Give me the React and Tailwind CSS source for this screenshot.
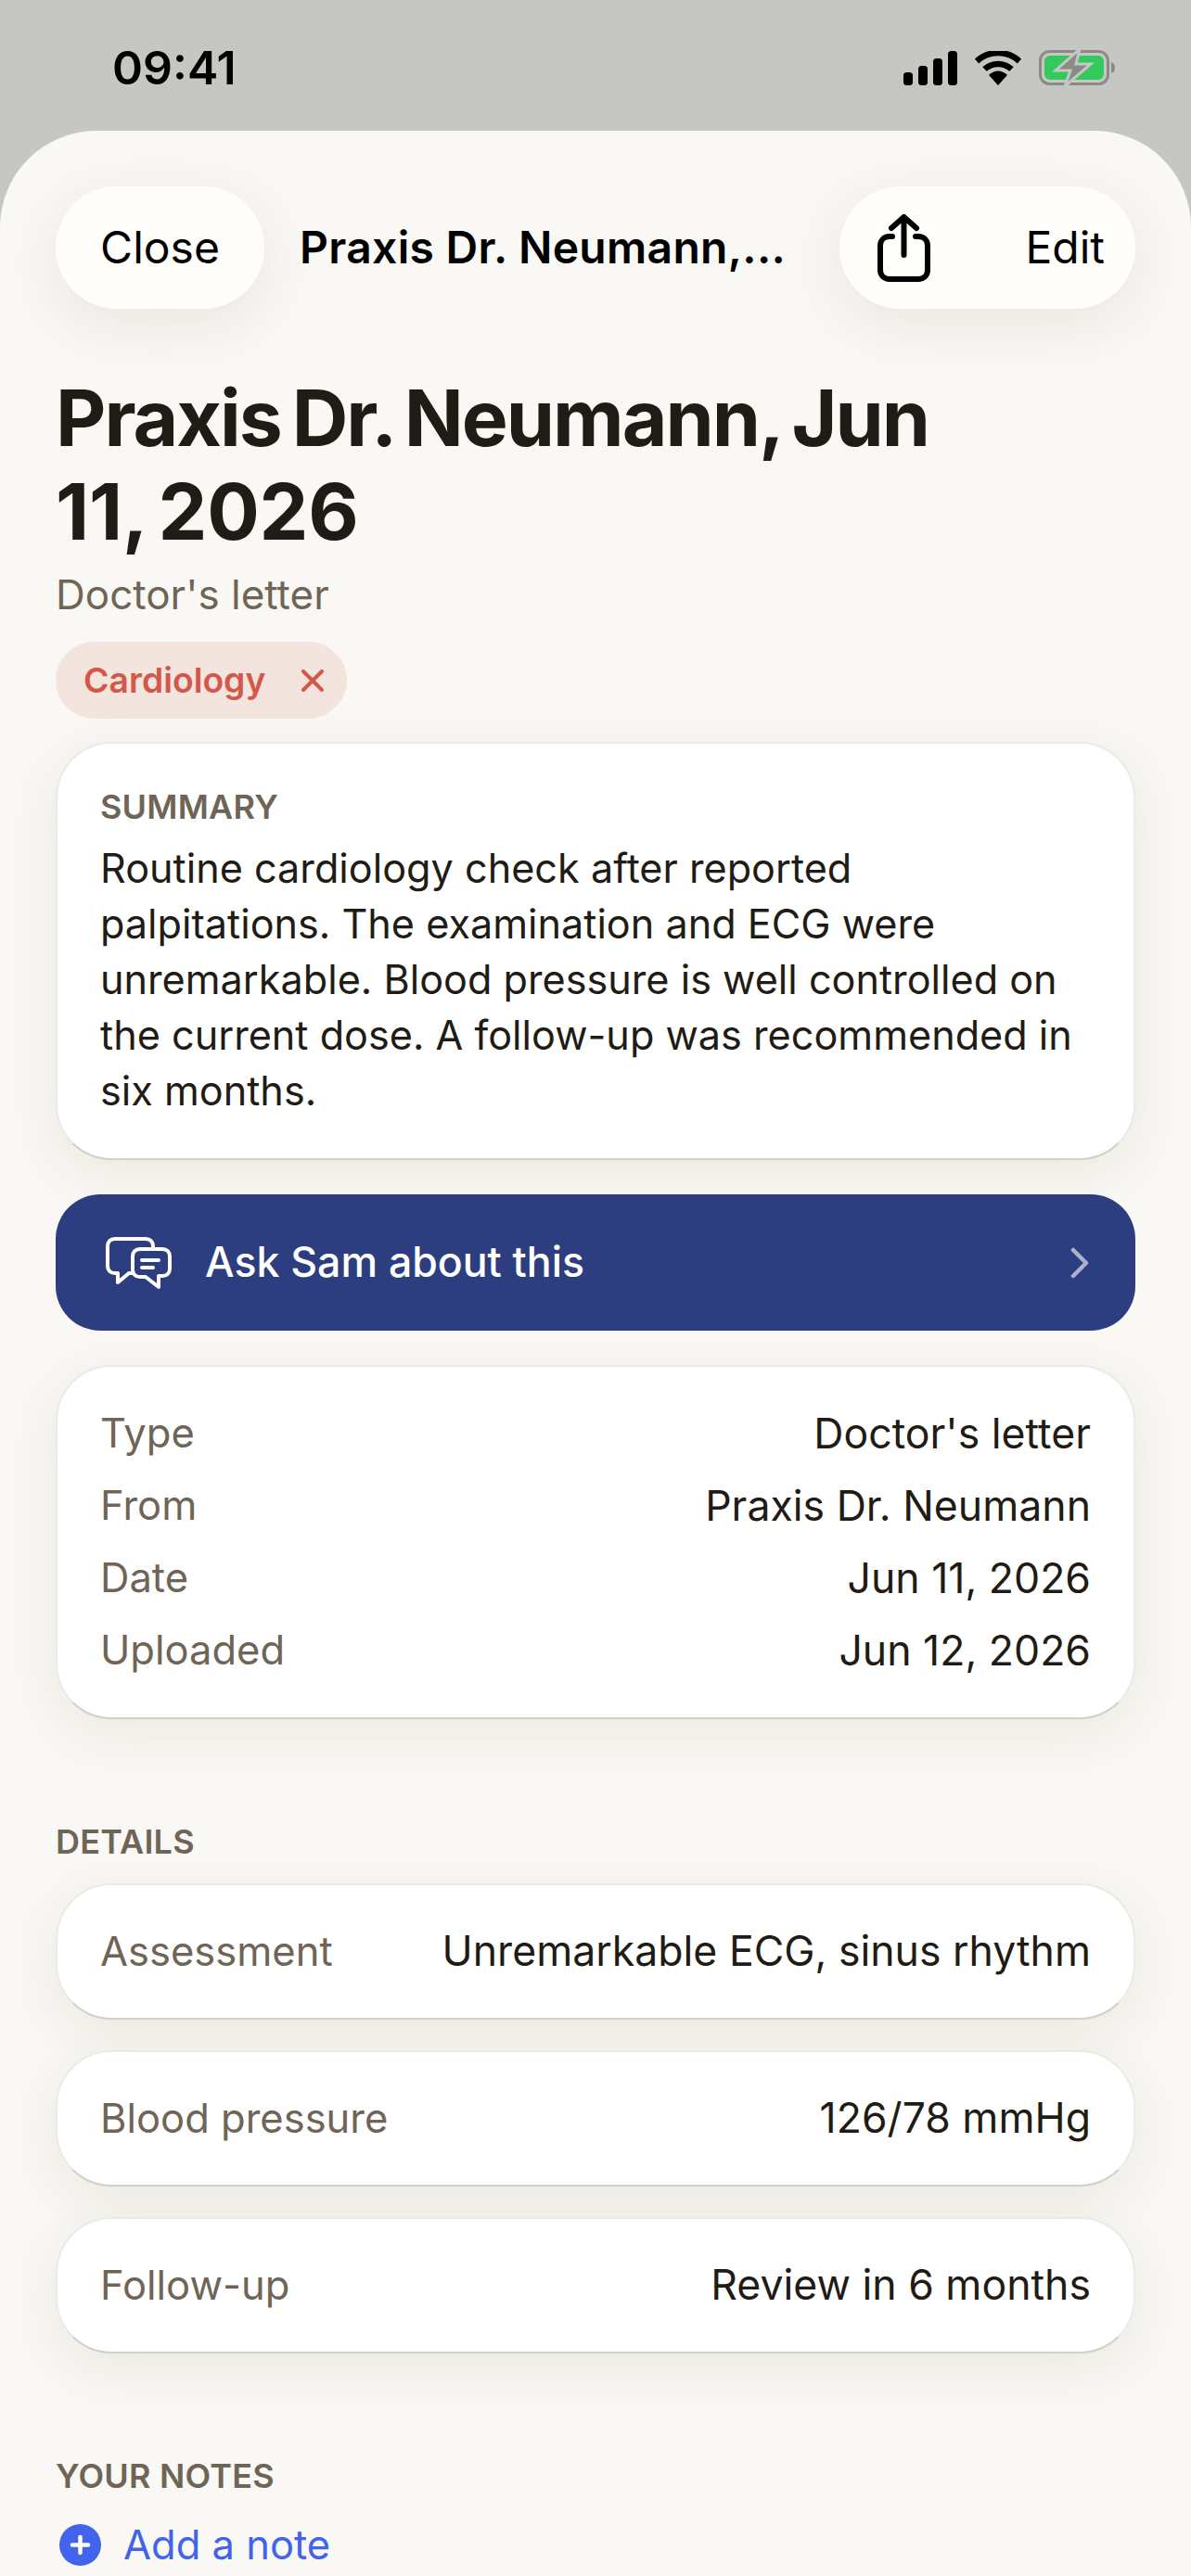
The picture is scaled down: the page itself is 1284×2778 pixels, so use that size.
const Row = ({ label, value }) => (
  <div className="flex h-[78px] items-center justify-between">
    <span className="text-[43.5px] text-[#6f6557]">{label}</span>
    <span className="text-[44.6px] text-[#1f1c16]">{value}</span>
  </div>
);

const cardSkin = "border-2 border-[#eceae4] border-b-[#d3d0c6] bg-white shadow-[0_16px_56px_rgba(60,50,30,0.08)]";

const DetailCard = ({ label, value }) => (
  <div className={"flex h-[147px] items-center justify-between rounded-[60px] px-[46px] " + cardSkin}>
    <span className="text-[43.5px] text-[#6f6557]">{label}</span>
    <span className="text-[44.6px] text-[#1f1c16]">{value}</span>
  </div>
);

const StatusIcons = () => (
  <div className="flex items-center gap-[19px]">
    <svg width="58" height="37" viewBox="0 0 58 37" fill="#000">
      <rect x="0" y="23" width="10" height="14" rx="3.5" />
      <rect x="16" y="16" width="10" height="21" rx="3.5" />
      <rect x="32" y="8" width="10" height="29" rx="3.5" />
      <rect x="48" y="0" width="10" height="37" rx="3.5" />
    </svg>
    <svg width="50" height="37" viewBox="0 0 50 37" fill="none">
      <path d="M2 11C15-1 35-1 48 11" stroke="#000" strokeWidth="6.5" />
      <path d="M10.500 19.500C18.500 12 31.500 12 39.500 19.500" stroke="#000" strokeWidth="6.500" />
      <path d="M15 26C21 20 29 20 35 26L25 37Z" fill="#000" />
    </svg>
    <svg width="82" height="40" viewBox="0 0 82 40" fill="none">
      <rect x="1.500" y="2.500" width="73" height="35" rx="10" stroke="#8a8b86" strokeWidth="3" />
      <rect x="6" y="7" width="64" height="26" rx="6" fill="#34c95c" />
      <path d="M78 14C81 15 82 17 82 20C82 23 81 25 78 26Z" fill="#8a8b86" />
      <path d="M44 0L18 23H34L28 40L56 16H40Z" fill="#8a8b86" stroke="#c6c7c2" strokeWidth="3" />
    </svg>
  </div>
);

const ShareIcon = () => (
  <svg width="57" height="73" viewBox="0 0 57 73" fill="none" stroke="#000" strokeWidth="6" strokeLinecap="round" strokeLinejoin="round">
    <path d="M16 24H13C7 24 3 28 3 34V60C3 66 7 70 13 70H44C50 70 54 66 54 60V34C54 28 50 24 44 24H41" />
    <path d="M28.500 44V3M15 15L28.500 3L42 15" />
  </svg>
);

const ChatIcon = () => (
  <svg width="71" height="56" viewBox="0 0 71 56" fill="none" stroke="#fff" strokeWidth="4" strokeLinecap="round" strokeLinejoin="round">
    <path d="M51 12V10C51 5 48 2 43 2H10C5 2 2 5 2 10V31C2 36 5 39 10 39H13V49L25 39H29" />
    <path d="M37 13H61C66 13 69 16 69 21V34C69 39 66 42 61 42H57V54L43 43H37C32 43 29 40 29 35V21C29 16 32 13 37 13Z" />
    <path d="M39 25H57M39 33H51" />
  </svg>
);

export default function App() {
  return (
    <div className="flex h-[2778px] w-[1284px] flex-col overflow-hidden bg-[#c6c7c2] font-['Inter',sans-serif]">
      <div className="flex h-[141px] shrink-0 items-start justify-between pl-[121px] pr-[82px] pt-[43px]">
        <span className="text-[50px] font-semibold leading-[60px] text-black">09:41</span>
        <div className="pt-[10px]">
          <StatusIcons />
        </div>
      </div>

      <div className="flex flex-1 flex-col rounded-t-[104px] bg-[#f9f8f4] px-[60px] pt-[60px]">
        <div className="flex h-[132px] shrink-0 items-center text-[48px] text-black">
          <div className="flex h-full w-[225px] shrink-0 items-center justify-center rounded-[66px] bg-[#fffefa] shadow-[0_16px_60px_rgba(60,50,30,0.09)]">
            Close
          </div>
          <div className="ml-[38px] whitespace-nowrap font-semibold tracking-[0.3px]">Praxis Dr. Neumann,...</div>
          <div className="ml-auto flex h-full w-[319px] shrink-0 items-center justify-between rounded-[66px] bg-[#fffefa] pl-[41px] pr-[33px] shadow-[0_16px_60px_rgba(60,50,30,0.09)]">
            <ShareIcon />
            <span>Edit</span>
          </div>
        </div>

        <h1 className="mt-[67px] w-[1000px] text-[84px] font-bold leading-[101px] tracking-[-2px] [word-spacing:-6px] text-[#1f1c16]">
          Praxis Dr. Neumann, Jun <span className="tracking-[-0.3px]">11, 2026</span>
        </h1>
        <div className="mt-[12px] text-[44px] leading-[54px] text-[#6f6557]">Doctor's letter</div>

        <div className="mt-[24px] flex h-[83px] w-[314px] shrink-0 items-center justify-between rounded-[42px] bg-[#f3e4de] pl-[30px] pr-[25px] text-[#d4584a]">
          <span className="text-[37.3px] font-semibold">Cardiology</span>
          <svg width="24" height="24" viewBox="0 0 24 24" fill="none" stroke="#d4584a" strokeWidth="4" strokeLinecap="round">
            <path d="M2 2L22 22M22 2L2 22" />
          </svg>
        </div>

        <div className={"mt-[25px] rounded-[60px] px-[46px] pb-[43px] pt-[48px] " + cardSkin}>
          <div className="text-[36px] font-semibold leading-[40px] tracking-[0.2px] text-[#6f6557]">SUMMARY</div>
          <p className="mt-[16px] max-w-[1060px] text-[43.2px] leading-[60px] text-[#1f1c16]">
            Routine cardiology check after reported palpitations. The examination and ECG were unremarkable. Blood pressure is well controlled on the current dose. A follow-up was recommended in six months.
          </p>
        </div>

        <div className="mt-[37px] flex h-[147px] shrink-0 items-center rounded-[48px] bg-[#2d3e80] pl-[54px] pr-[50px]">
          <ChatIcon />
          <span className="ml-[36px] text-[44.6px] font-medium text-white">Ask Sam about this</span>
          <svg className="ml-auto" width="20" height="34" viewBox="0 0 20 34" fill="none" stroke="#aab0cd" strokeWidth="4.500" strokeLinecap="round" strokeLinejoin="round">
            <path d="M3 3L17 17L3 31" />
          </svg>
        </div>

        <div className={"mt-[37px] rounded-[60px] px-[46px] py-[33px] " + cardSkin}>
          <Row label="Type" value="Doctor's letter" />
          <Row label="From" value="Praxis Dr. Neumann" />
          <Row label="Date" value="Jun 11, 2026" />
          <Row label="Uploaded" value="Jun 12, 2026" />
        </div>

        <div className="mt-[112px] text-[36px] font-semibold leading-[40px] tracking-[0.2px] text-[#6f6557]">DETAILS</div>
        <div className="mt-[25px] flex flex-col gap-[33px]">
          <DetailCard label="Assessment" value="Unremarkable ECG, sinus rhythm" />
          <DetailCard label="Blood pressure" value="126/78 mmHg" />
          <DetailCard label="Follow-up" value="Review in 6 months" />
        </div>

        <div className="mt-[112px] text-[36px] font-semibold leading-[40px] tracking-[0.2px] text-[#6f6557]">YOUR NOTES</div>
        <div className="mt-[27px] flex items-center pl-[4px] text-[43.5px] text-[#4263eb]">
          <svg width="45" height="45" viewBox="0 0 45 45" fill="none">
            <circle cx="22.500" cy="22.500" r="22.500" fill="#4263eb" />
            <path d="M14 22.500H31M22.500 14V31" stroke="#fff" strokeWidth="4.500" strokeLinecap="round" />
          </svg>
          <span className="ml-[24px] leading-[54px]">Add a note</span>
        </div>
      </div>
    </div>
  );
}
